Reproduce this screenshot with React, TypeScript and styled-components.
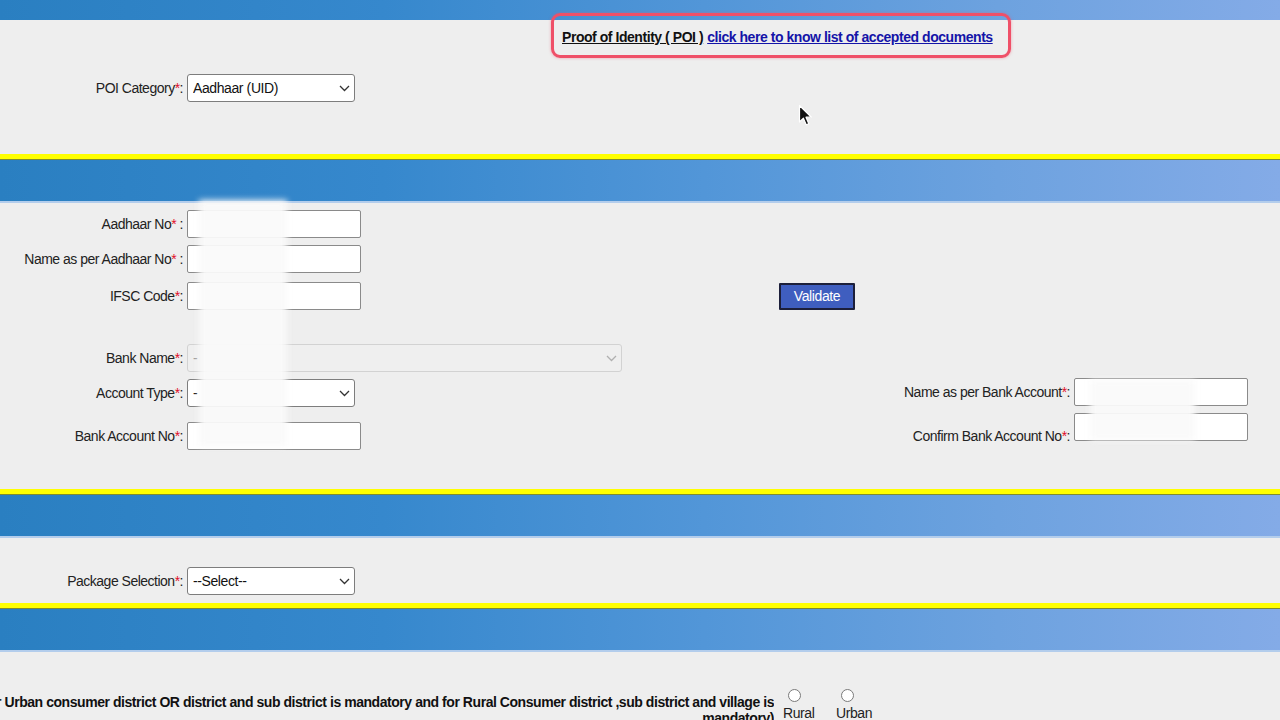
import React from "react";
import styled, { createGlobalStyle } from "styled-components";

const Global = createGlobalStyle`
  html, body { margin: 0; padding: 0; background: #eeeeee; }
  body {
    font-family: "Liberation Sans", Arial, sans-serif;
    font-size: 14px;
    color: #222;
    overflow: hidden;
  }
  * { box-sizing: border-box; }
`;

const blueGrad = `linear-gradient(to right, #2a7fc1 0%, #3688cd 30%, #5296d8 55%, #6da2df 78%, #84abe7 100%)`;

const Page = styled.div`
  position: relative;
  width: 1280px;
  height: 720px;
  overflow: hidden;
  background: #eeeeee;
`;

const TopBar = styled.div`
  height: 20px;
  background: ${blueGrad};
`;

const Band = styled.div`
  height: 49px;
  border-top: 5px solid #ffff00;
  border-bottom: 2px solid #b3cdec;
  background: ${blueGrad};
  box-shadow: inset 0 1px 0 #7e8b30;
`;

const Section = styled.div<{ $h: number }>`
  height: ${(p) => p.$h}px;
  display: flex;
  flex-direction: column;
`;

const NoticeRow = styled.div`
  display: flex;
  align-items: center;
  height: 20px;
  margin-top: 7px;
  padding-left: 562px;
  font-size: 14px;
  font-weight: bold;
  letter-spacing: -0.45px;
  white-space: nowrap;
`;

const NoticeText = styled.span`
  color: #111;
  text-decoration: underline;
`;

const NoticeLink = styled.a`
  color: #1414a8;
  text-decoration: underline;
  margin-left: 4px;
`;

const Row = styled.div<{ $top: number; $low?: boolean }>`
  display: flex;
  align-items: ${(p) => (p.$low ? "flex-end" : "center")};
  height: ${(p) => (p.$low ? 31 : 28)}px;
  margin-top: ${(p) => p.$top}px;
`;

const Label = styled.label<{ $w?: number }>`
  width: ${(p) => p.$w ?? 183}px;
  text-align: right;
  margin-right: 4px;
  font-size: 14px;
  line-height: 16px;
  letter-spacing: -0.5px;
  color: #222;
  white-space: nowrap;
`;

const Star = styled.span`
  color: #e0102a;
`;

const TextInput = styled.input<{ $w?: number }>`
  align-self: flex-start;
  width: ${(p) => p.$w ?? 174}px;
  height: 28px;
  border: 1px solid #8a8a8a;
  border-radius: 2px;
  background: #fff;
  font: 14px "Liberation Sans", Arial, sans-serif;
  padding: 0 6px;
  outline: none;
`;

const SelectWrap = styled.div<{ $w: number }>`
  position: relative;
  width: ${(p) => p.$w}px;
  height: 28px;
`;

const Select = styled.select<{ $disabled?: boolean }>`
  appearance: none;
  -webkit-appearance: none;
  width: 100%;
  height: 100%;
  border: 1px solid ${(p) => (p.$disabled ? "#d2d2d2" : "#7d7d7d")};
  border-radius: 3px;
  background: ${(p) => (p.$disabled ? "#efefef" : "#fff")};
  color: ${(p) => (p.$disabled ? "#999" : "#111")};
  font: 14px "Liberation Sans", Arial, sans-serif;
  letter-spacing: -0.4px;
  padding: 0 24px 0 5px;
  outline: none;
`;

const Chevron = styled.svg`
  position: absolute;
  right: 5px;
  top: 11px;
  pointer-events: none;
`;

const ValidateButton = styled.button`
  margin-left: 418px;
  width: 76px;
  height: 27px;
  background: #3f5ebf;
  color: #fff;
  border: 2px solid #1c1f3a;
  border-radius: 1px;
  font: 14px "Liberation Sans", Arial, sans-serif;
  letter-spacing: -0.4px;
  padding: 0;
`;

const Split = styled.div`
  display: flex;
  align-items: flex-start;
`;

const Column = styled.div`
  display: flex;
  flex-direction: column;
`;

const RightColumn = styled.div`
  display: flex;
  flex-direction: column;
  margin-left: auto;
  margin-right: 32px;
`;

const BottomRow = styled.div`
  display: flex;
  align-items: flex-start;
`;

const NoteClip = styled.div`
  width: 774px;
  flex-shrink: 0;
  display: flex;
  justify-content: flex-end;
  overflow: hidden;
  margin-top: 42px;
`;

const Note = styled.div`
  flex-shrink: 0;
  text-align: right;
  white-space: nowrap;
  font-weight: bold;
  font-size: 14px;
  letter-spacing: -0.45px;
  line-height: 16px;
  color: #111;
`;

const RadioGroup = styled.div`
  display: flex;
  margin-left: 9px;
  margin-top: 37px;
  gap: 19px;
`;

const RadioOption = styled.label`
  display: flex;
  flex-direction: column;
  align-items: flex-start;
  width: 34px;
  font-size: 14px;
  letter-spacing: -0.4px;
  color: #222;
`;

const Radio = styled.input`
  appearance: none;
  -webkit-appearance: none;
  width: 13px;
  height: 13px;
  margin: 0 0 3px 5px;
  border: 1px solid #7a7a7a;
  border-radius: 50%;
  background: #fff;
`;

const Highlight = styled.div`
  position: absolute;
  left: 551px;
  top: 13px;
  width: 460px;
  height: 45px;
  border: 3px solid #ef5068;
  border-radius: 9px;
  box-shadow: 0 0 3px rgba(239, 80, 104, 0.5);
  pointer-events: none;
`;

const Blur = styled.div`
  position: absolute;
  background: rgba(250, 250, 250, 0.94);
  filter: blur(3px);
  pointer-events: none;
`;

const Cursor = styled.svg`
  position: absolute;
  left: 798px;
  top: 104px;
  pointer-events: none;
`;

const ChevronIcon = ({ color = "#333" }: { color?: string }) => (
  <Chevron width="11" height="7" viewBox="0 0 11 7">
    <path d="M1 1 L5.5 5.5 L10 1" fill="none" stroke={color} strokeWidth="1.3" />
  </Chevron>
);

const Req = () => <Star>*</Star>;

const Dropdown = ({
  w,
  value,
  disabled,
}: {
  w: number;
  value: string;
  disabled?: boolean;
}) => (
  <SelectWrap $w={w}>
    <Select $disabled={disabled} defaultValue={value}>
      <option>{value}</option>
    </Select>
    <ChevronIcon color={disabled ? "#b0b0b0" : "#333"} />
  </SelectWrap>
);

export default function App() {
  return (
    <Page>
      <Global />
      <TopBar />
      <Section $h={134}>
        <NoticeRow>
          <NoticeText>Proof of Identity ( POI )</NoticeText>
          <NoticeLink href="#">click here to know list of accepted documents</NoticeLink>
        </NoticeRow>
        <Row $top={27}>
          <Label>
            POI Category<Req />:
          </Label>
          <Dropdown w={168} value="Aadhaar (UID)" />
        </Row>
      </Section>
      <Band />
      <Section $h={286}>
        <Row $top={7}>
          <Label>
            Aadhaar No<Req /> :
          </Label>
          <TextInput />
        </Row>
        <Row $top={7}>
          <Label>
            Name as per Aadhaar No<Req /> :
          </Label>
          <TextInput />
        </Row>
        <Row $top={9}>
          <Label>
            IFSC Code<Req />:
          </Label>
          <TextInput />
          <ValidateButton>Validate</ValidateButton>
        </Row>
        <Row $top={34}>
          <Label>
            Bank Name<Req />:
          </Label>
          <Dropdown w={435} value="-" disabled />
        </Row>
        <Split>
          <Column>
            <Row $top={7}>
              <Label>
                Account Type<Req />:
              </Label>
              <Dropdown w={168} value="-" />
            </Row>
            <Row $top={15}>
              <Label>
                Bank Account No<Req />:
              </Label>
              <TextInput />
            </Row>
          </Column>
          <RightColumn>
            <Row $top={6}>
              <Label $w={200}>
                Name as per Bank Account<Req />:
              </Label>
              <TextInput $w={174} />
            </Row>
            <Row $top={7} $low>
              <Label $w={200}>
                Confirm Bank Account No<Req />:
              </Label>
              <TextInput $w={174} />
            </Row>
          </RightColumn>
        </Split>
      </Section>
      <Band />
      <Section $h={65}>
        <Row $top={29}>
          <Label>
            Package Selection<Req />:
          </Label>
          <Dropdown w={168} value="--Select--" />
        </Row>
      </Section>
      <Band />
      <BottomRow>
        <NoteClip>
          <Note>
            (For Urban consumer district OR district and sub district is mandatory and for Rural Consumer district ,sub district and village is
            <br />
            mandatory)
          </Note>
        </NoteClip>
        <RadioGroup>
          <RadioOption>
            <Radio type="radio" name="area" />
            Rural
          </RadioOption>
          <RadioOption>
            <Radio type="radio" name="area" />
            Urban
          </RadioOption>
        </RadioGroup>
      </BottomRow>

      <Highlight />
      <Blur style={{ left: 199, top: 200, width: 88, height: 246 }} />
      <Blur style={{ left: 1090, top: 380, width: 105, height: 60 }} />
      <Cursor width="16" height="24" viewBox="0 0 16 24">
        <path
          d="M1.5 1.5 L1.5 18 L5.4 14.2 L8.2 20.8 L10.8 19.7 L8 13.2 L13.4 13.2 Z"
          fill="#111"
          stroke="#fff"
          strokeWidth="1.2"
          strokeLinejoin="round"
        />
      </Cursor>
    </Page>
  );
}
